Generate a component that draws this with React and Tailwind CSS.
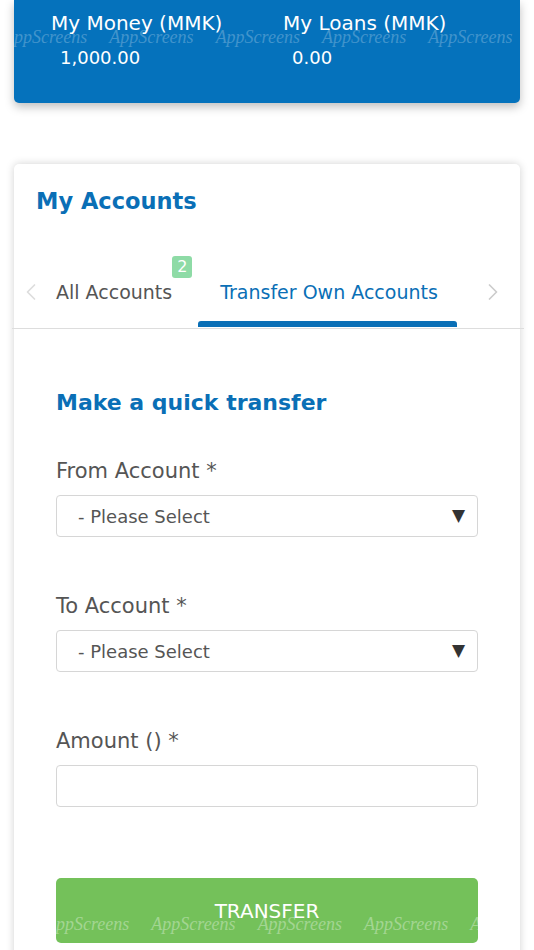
import { ChevronLeft, ChevronRight } from 'lucide-react'

const FONT = { fontFamily: '"DejaVu Sans", "Open Sans", sans-serif' }

function Watermark({ className }) {
  return (
    <div
      className={`pointer-events-none absolute left-0 right-0 flex gap-[22px] whitespace-nowrap text-[18px] italic ${className}`}
      style={{ fontFamily: '"Liberation Serif", serif' }}
    >
      {['ppScreens', 'AppScreens', 'AppScreens', 'AppScreens', 'AppScreens', 'AppScreens'].map((w, i) => (
        <span key={i}>{w}</span>
      ))}
    </div>
  )
}

function Field({ label, children }) {
  return (
    <div>
      <div className="text-[21px] leading-[26px] text-[#555]">{label}</div>
      <div className="mt-[11px]">{children}</div>
    </div>
  )
}

function SelectBox() {
  return (
    <div className="flex h-[42px] items-center justify-between rounded-[4px] border border-[#d6d6d6] pl-[21px] pr-[12px] text-[18px] text-[#555]">
      <span>- Please Select</span>
      <span className="text-[17px] text-[#333]">▼</span>
    </div>
  )
}

export default function App() {
  return (
    <div className="relative h-[950px] w-[534px] overflow-hidden bg-white" style={FONT}>
      <div className="relative mx-[14px] h-[103px] overflow-hidden rounded-b-[5px] bg-[#0572bc] shadow-[0_4px_10px_rgba(0,0,0,0.25)]">
        <div className="flex pl-[37px] pt-[10px] text-white">
          <div className="w-[232px]">
            <div className="text-[20px] leading-[26px]">My Money (MMK)</div>
            <div className="mt-[11px] pl-[9px] text-[18px] leading-[22px]">1,000.00</div>
          </div>
          <div>
            <div className="text-[20px] leading-[26px]">My Loans (MMK)</div>
            <div className="mt-[11px] pl-[9px] text-[18px] leading-[22px]">0.00</div>
          </div>
        </div>
        <Watermark className="top-[24px] -left-[14px] text-white/25" />
      </div>

      <div className="mx-[14px] mt-[61px] h-[900px] rounded-t-[5px] bg-white shadow-[0_0_8px_rgba(0,0,0,0.18)]">
        <h1 className="px-[22px] pt-[23px] text-[22.5px] font-bold leading-[28px] text-[#0a6fb6]">My Accounts</h1>

        <div className="relative mt-[50px] flex h-[54px] items-center">
          <ChevronLeft className="ml-[3px] h-7 w-7 text-[#ddd]" strokeWidth={1.5} />
          <div className="relative ml-[11px] text-[19px] leading-[22px] text-[#555]">
            All Accounts
            <span className="absolute -right-[20px] -top-[25px] flex h-[22px] w-[20px] items-center justify-center rounded-[3px] bg-[#8edba6] text-[16px] text-white">
              2
            </span>
          </div>
          <div className="relative ml-[48px] text-[19px] leading-[22px] text-[#0a6fb6]">
            Transfer Own Accounts
          </div>
          <ChevronRight className="ml-auto mr-[13px] h-7 w-7 text-[#ccc]" strokeWidth={1.5} />
          <div className="absolute bottom-[-8px] left-[184px] h-[6px] w-[259px] rounded-t-[3px] bg-[#0a6fb6]" />
        </div>
        <div className="-ml-[2px] -mr-[4px] mt-[9px] h-px bg-[#ddd]" />

        <div className="px-[42px]">
          <h2 className="mt-[60px] text-[22px] font-bold leading-[28px] text-[#0a6fb6]">Make a quick transfer</h2>
          <div className="mt-[41px] flex flex-col gap-[56px]">
            <Field label="From Account *">
              <SelectBox />
            </Field>
            <Field label="To Account *">
              <SelectBox />
            </Field>
            <Field label="Amount () *">
              <div className="h-[42px] rounded-[4px] border border-[#d6d6d6]" />
            </Field>
          </div>
          <div className="relative mt-[71px] flex h-[65px] items-center justify-center overflow-hidden rounded-[5px] bg-[#74c15a] text-[20px] text-white">
            TRANSFER
            <Watermark className="top-[33px] -left-[56px] text-white/35" />
          </div>
        </div>
      </div>
    </div>
  )
}
